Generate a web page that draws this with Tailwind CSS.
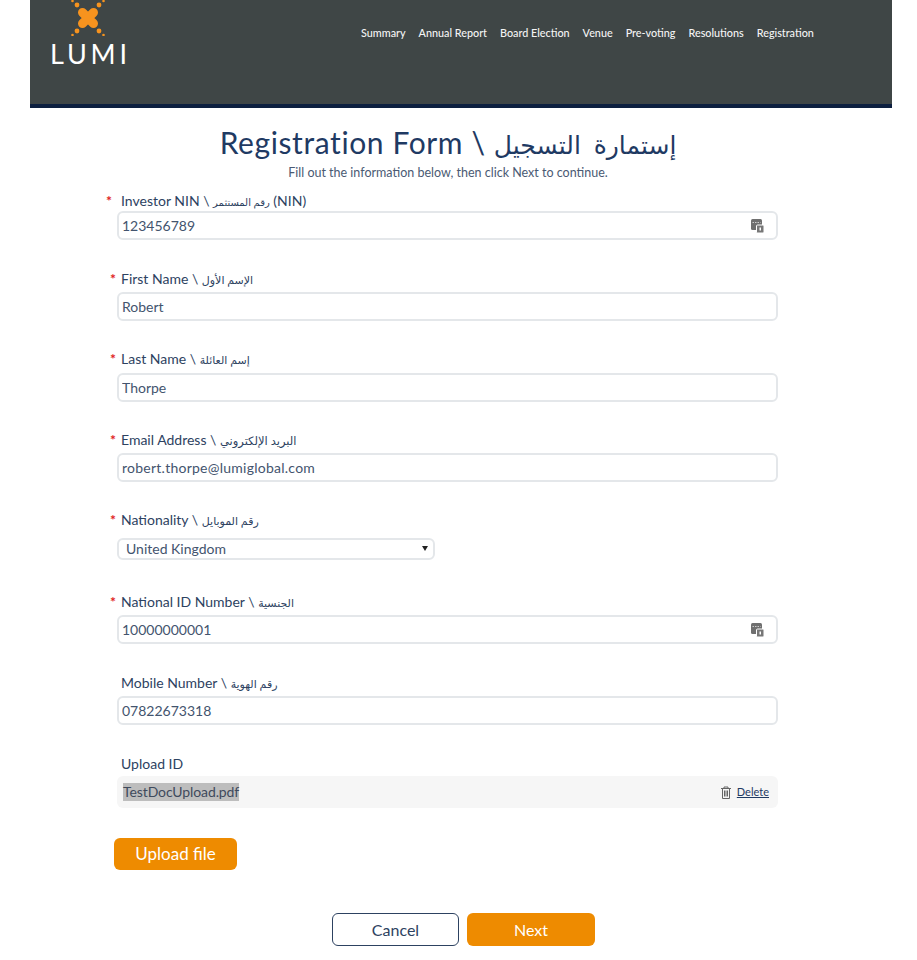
<!DOCTYPE html>
<html lang="en">
  <head>
    <meta charset="UTF-8">
    <meta name="viewport" content="width=device-width, initial-scale=1.0">
    <script src="https://cdn.jsdelivr.net/npm/@tailwindcss/browser@4"></script>
    <title>Registration</title>
  </head>
  <body class="bg-white font-['Lato','DejaVu_Sans',sans-serif] text-[#2d4261] h-[960px] overflow-hidden">
    <header class="mx-[30px] w-[862px] h-[108px] bg-[#3f4646] border-b-4 border-[#0c1f3f] flex items-start">
      <div class="w-[331px] pl-[20px] flex flex-col">
        <svg class="ml-[18px] w-[40px] h-[36px]" viewBox="0 0 40 36">
          <path d="M14.5 12.5 L25.5 23.5 M25.5 12.5 L14.5 23.5" stroke="#f7931e" stroke-width="9" stroke-linecap="round"/>
          <g fill="#f7931e">
            <circle cx="9" cy="5" r="2.4"/><circle cx="31" cy="5" r="2.4"/><circle cx="9" cy="31" r="2.4"/><circle cx="31" cy="31" r="2.4"/>
            <circle cx="4.5" cy="1" r="1.3"/><circle cx="35.5" cy="1" r="1.3"/><circle cx="4.5" cy="35" r="1.3"/><circle cx="35.5" cy="35" r="1.3"/>
          </g>
        </svg>
        <span class="font-['Lato'] text-white text-[27px] leading-[28px] mt-[4px] tracking-[3.8px]">LUMI</span>
      </div>
      <nav class="flex gap-[13px] mt-[25px] text-[10.8px] leading-4 text-[#f4f4f4] font-medium">
        <a>Summary</a><a>Annual Report</a><a>Board Election</a><a>Venue</a><a>Pre-voting</a><a>Resolutions</a><a>Registration</a>
      </nav>
    </header>

    <main class="w-[917px]">
      <h1 class="mt-[15px] mr-[21px] text-center text-[30px] leading-[39px] text-[#1f3a63] tracking-[0.6px]">Registration Form \ <span class="text-[25px]">إستمارة&nbsp; التسجيل</span></h1>
      <p class="text-center text-[12.5px] leading-[18px] mr-[21px] text-[#4a5a73]">Fill out the information below, then click Next to continue.</p>

      <form class="ml-[117px] w-[661px]">
        <label class="flex items-center h-[20px] mt-[8px] mb-[1px] -ml-[11px] text-[14px]"><span class="w-[15px] font-bold text-[#e02020]">*</span><span>Investor NIN \ <span class="text-[10px]">رقم المستثمر</span> (NIN)</span></label>
        <div class="relative">
          <input class="block w-full h-[29px] rounded-md border-2 border-[#e4e7ea] px-[3px] text-[14px] text-[#43546e]" value="123456789">
          <svg class="absolute right-[14px] top-[8px] w-[13px] h-[14px]" viewBox="0 0 13 14"><rect x="0" y="0" width="11" height="11" rx="1.5" fill="#6f6f6f"/><path d="M1.5 3.5h8" stroke="#ccc" stroke-width="1" stroke-dasharray="1.5 1"/><rect x="5.5" y="6" width="7.5" height="8" rx="1" fill="#777" stroke="#fff" stroke-width="1"/><rect x="8.5" y="8.5" width="1.5" height="3" fill="#fff"/></svg>
        </div>

        <label class="flex items-center h-[20px] mt-[28px] mb-[4px] -ml-[7px] text-[14px]"><span class="w-[11px] font-bold text-[#e02020]">*</span><span>First Name \ <span class="text-[11px]">الإسم الأول</span></span></label>
        <input class="block w-full h-[29px] rounded-md border-2 border-[#e4e7ea] px-[3px] text-[14px] text-[#43546e]" value="Robert">

        <label class="flex items-center h-[20px] mt-[27px] mb-[5px] -ml-[7px] text-[14px]"><span class="w-[11px] font-bold text-[#e02020]">*</span><span>Last Name \ <span class="text-[11px]">إسم العائلة</span></span></label>
        <input class="block w-full h-[29px] rounded-md border-2 border-[#e4e7ea] px-[3px] text-[14px] text-[#43546e]" value="Thorpe">

        <label class="flex items-center h-[20px] mt-[27px] mb-[4px] -ml-[7px] text-[14px]"><span class="w-[11px] font-bold text-[#e02020]">*</span><span>Email Address \ <span class="text-[11.5px]">البريد الإلكتروني</span></span></label>
        <input class="block w-full h-[29px] rounded-md border-2 border-[#e4e7ea] px-[3px] text-[14px] tracking-[0.25px] text-[#43546e]" value="robert.thorpe@lumiglobal.com">

        <label class="flex items-center h-[20px] mt-[27px] mb-[9px] -ml-[7px] text-[14px]"><span class="w-[11px] font-bold text-[#e02020]">*</span><span>Nationality \ <span class="text-[11px]">رقم الموبايل</span></span></label>
        <div class="relative w-[318px]">
          <select class="block appearance-none w-full h-[22px] rounded-md border-2 border-[#e4e7ea] pl-[7px] text-[14px] leading-4 text-[#43546e] bg-white"><option>United Kingdom</option></select>
          <span class="absolute right-[7px] top-[8px] w-0 h-0 border-x-[3px] border-x-transparent border-t-[5px] border-t-[#222]"></span>
        </div>

        <label class="flex items-center h-[20px] mt-[31px] mb-[4px] -ml-[7px] text-[14px]"><span class="w-[11px] font-bold text-[#e02020]">*</span><span>National ID Number \ <span class="text-[11px]">الجنسية</span></span></label>
        <div class="relative">
          <input class="block w-full h-[29px] rounded-md border-2 border-[#e4e7ea] px-[3px] text-[14px] text-[#43546e]" value="10000000001">
          <svg class="absolute right-[14px] top-[8px] w-[13px] h-[14px]" viewBox="0 0 13 14"><rect x="0" y="0" width="11" height="11" rx="1.5" fill="#6f6f6f"/><path d="M1.5 3.5h8" stroke="#ccc" stroke-width="1" stroke-dasharray="1.5 1"/><rect x="5.5" y="6" width="7.5" height="8" rx="1" fill="#777" stroke="#fff" stroke-width="1"/><rect x="8.5" y="8.5" width="1.5" height="3" fill="#fff"/></svg>
        </div>

        <label class="flex items-center h-[20px] mt-[28px] mb-[4px] ml-[4px] text-[14px]"><span>Mobile Number \ <span class="text-[11px]">رقم الهوية</span></span></label>
        <input class="block w-full h-[29px] rounded-md border-2 border-[#e4e7ea] px-[3px] text-[14px] text-[#43546e]" value="07822673318">

        <label class="flex items-center h-[20px] mt-[28px] mb-[3px] ml-[4px] text-[14px]">Upload ID</label>
        <div class="flex items-center justify-between h-[32px] rounded-md bg-[#f6f6f6] pl-[6px] pr-[9px]">
          <span class="bg-[#bdbdbd] text-[14px] leading-[18px] tracking-[-0.1px] text-[#3f4a5c]">TestDocUpload.pdf</span>
          <span class="flex items-center gap-[5px] text-[11px] underline text-[#1f3a63]">
            <svg class="w-[12px] h-[13px]" viewBox="0 0 12 13" fill="none" stroke="#666" stroke-width="1"><path d="M1 2.5h10M4 2.5V1h4v1.5M2.5 2.5v10h7v-10M4.5 4.5v6M6 4.5v6M7.5 4.5v6"/></svg>
            Delete
          </span>
        </div>

        <button type="button" class="block -ml-[3px] mt-[30px] w-[123px] h-[32px] rounded-md bg-[#ee8b00] text-white text-[17px]">Upload file</button>

        <div class="flex gap-2 mt-[43px] ml-[215px]">
          <button type="button" class="w-[127px] h-[33px] rounded-md border border-[#2d4261] bg-white text-[16px] text-[#2d4261]">Cancel</button>
          <button type="button" class="w-[128px] h-[33px] rounded-md bg-[#ee8b00] text-white text-[16px]">Next</button>
        </div>
      </form>
    </main>
  </body>
</html>
